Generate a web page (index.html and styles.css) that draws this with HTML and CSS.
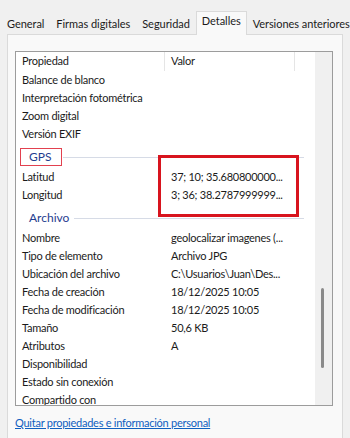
FILE: index.html
```html
<!DOCTYPE html>
<html lang="es">

<head>
  <meta charset="UTF-8">
  <meta name="viewport" content="width=device-width, initial-scale=1.0">
  <title>Propiedades</title>
  <link rel="stylesheet" href="styles.css">
</head>

<body>
  <div class="dialog">
    <ul class="tabs">
      <li class="tab">General</li>
      <li class="tab">Firmas digitales</li>
      <li class="tab">Seguridad</li>
      <li class="tab tab-active">Detalles</li>
      <li class="tab">Versiones anteriores</li>
    </ul>

    <section class="page">
      <div class="list">
        <div class="list-body">
          <div class="list-head">
            <span class="head-cell">Propiedad</span>
            <span class="head-cell">Valor</span>
            <span class="head-cell head-fill"></span>
          </div>

          <div class="row"><span>Balance de blanco</span><span></span></div>
          <div class="row"><span>Interpretación fotométrica</span><span></span></div>
          <div class="row"><span>Zoom digital</span><span></span></div>
          <div class="row"><span>Versión EXIF</span><span></span></div>

          <div class="group">
            <span class="group-label group-marked">GPS</span>
            <span class="group-line"></span>
          </div>
          <div class="row"><span>Latitud</span><span>37; 10; 35.680800000...</span></div>
          <div class="row"><span>Longitud</span><span>3; 36; 38.2787999999...</span></div>

          <div class="group">
            <span class="group-label">Archivo</span>
            <span class="group-line"></span>
          </div>
          <div class="row"><span>Nombre</span><span>geolocalizar imagenes (...</span></div>
          <div class="row"><span>Tipo de elemento</span><span>Archivo JPG</span></div>
          <div class="row"><span>Ubicación del archivo</span><span>C:\Usuarios\Juan\Des...</span></div>
          <div class="row"><span>Fecha de creación</span><span>18/12/2025 10:05</span></div>
          <div class="row"><span>Fecha de modificación</span><span>18/12/2025 10:05</span></div>
          <div class="row"><span>Tamaño</span><span>50,6 KB</span></div>
          <div class="row"><span>Atributos</span><span>A</span></div>
          <div class="row"><span>Disponibilidad</span><span></span></div>
          <div class="row"><span>Estado sin conexión</span><span></span></div>
          <div class="row"><span>Compartido con</span><span></span></div>
        </div>

        <div class="scrollbar">
          <div class="thumb"></div>
        </div>

        <!-- red annotation around the coordinates -->
        <div class="highlight"></div>
      </div>

      <a class="link" href="#">Quitar propiedades e información personal</a>
    </section>
  </div>
</body>

</html>
```

FILE: styles.css
```css
body {
  margin: 0;
  background: #f0f0f0;
  font-family: Lato, "Noto Sans", sans-serif;
  font-size: 11px;
  letter-spacing: -0.25px;
  color: #1b1b1b;
}

.dialog {
  padding-block-start: 12px;
  block-size: 426px;
  overflow: hidden;
}

.tabs {
  margin: 0;
  padding: 0 0 0 1px;
  list-style-type: none;
  display: flex;
  align-items: flex-end;
  block-size: 22px;
  letter-spacing: -0.05px;
}

.tab {
  padding: 0 5px;
  block-size: 20px;
  line-height: 19px;
  white-space: nowrap;
  border: 1px solid transparent;
  border-block-end: 0;
}

.tab-active {
  position: relative;
  block-size: 23px;
  line-height: 18px;
  margin-block-end: -1px;
  background: #f9f9f9;
  border-color: #dadada;
  z-index: 1;
}

.page {
  margin-inline: 7px;
  padding: 16px 0 0 7px;
  block-size: 400px;
  background: #f9f9f9;
  border: 1px solid #dadada;
}

.list {
  position: relative;
  display: flex;
  inline-size: 318px;
  block-size: 355px;
  box-sizing: border-box;
  background: #fff;
  border: 1px solid #9c9c9c;
  overflow: hidden;
}

.list-body {
  flex: 1;
}

.list-head {
  display: grid;
  grid-template-columns: 149px 130px 1fr;
  block-size: 19px;
  line-height: 18px;
}

.head-cell {
  padding-inline-start: 6px;
  border-inline-end: 1px solid #e5e5e5;
}

.head-fill {
  border: 0;
}

.row {
  display: grid;
  grid-template-columns: 149px 1fr;
  block-size: 18px;
  line-height: 18px;
  white-space: nowrap;
}

.row span {
  padding-inline-start: 6px;
}

.group {
  display: flex;
  align-items: flex-start;
  block-size: 25px;
  padding-block-start: 5px;
  box-sizing: border-box;
}

.group-label {
  margin-inline-start: 5px;
  padding: 0 4px 0 8px;
  line-height: 18px;
  font-size: 12px;
  letter-spacing: 0;
  color: #1f3d8f;
}

.group-marked {
  margin-inline-start: 4px;
  padding-inline-end: 10px;
  line-height: 16px;
  border: 1px solid #e2414f;
}

.group-line {
  flex: 1;
  margin: 9px 11px 0 1px;
  border-block-start: 1px solid #d6dbe6;
}

.scrollbar {
  position: relative;
  inline-size: 17px;
  background: #f0f0f0;
}

.thumb {
  position: absolute;
  inset-inline-start: 6px;
  inset-block-start: 236px;
  inline-size: 3px;
  block-size: 80px;
  border-radius: 2px;
  background: #8a8a8a;
}

.highlight {
  position: absolute;
  inset-inline-start: 142px;
  inset-block-start: 103px;
  inline-size: 141px;
  block-size: 62px;
  box-sizing: border-box;
  border: 3px solid #d8141e;
}

.link {
  display: inline-block;
  margin-block-start: 9px;
  line-height: 16px;
  color: #1060c0;
}
```
